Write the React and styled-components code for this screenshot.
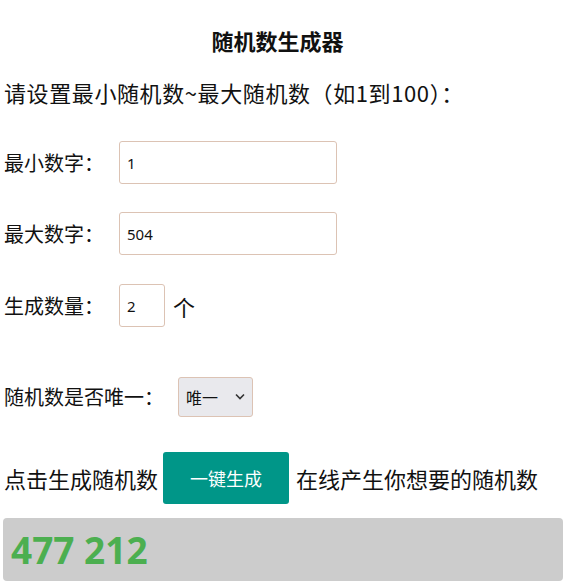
import React, { useState } from 'react'
import styled, { createGlobalStyle } from 'styled-components'

const GlobalStyle = createGlobalStyle`
    html, body {
        margin: 0;
        padding: 0;
        background: #fff;
    }
    body {
        font-family: "Noto Sans CJK SC", "Noto Sans", sans-serif;
        color: #111;
    }
`;

const Page = styled.div`
    width: 560px;
    padding: 0 6px 6px 3px;
`;

const Title = styled.h3`
    margin: 25px 11px 0 0;
    font-size: 22px;
    line-height: 30px;
    font-weight: 700;
    text-align: center;
`;

const Intro = styled.p`
    margin: 22px 0 0 1px;
    font-size: 22px;
    line-height: 30px;
    letter-spacing: 0.6px;
`;

const Row = styled.div`
    display: flex;
    align-items: center;
    margin-top: ${({top}) => top}px;
    font-size: ${({big}) => (big ? '22px' : '20px')};
    line-height: 30px;
`;

const Label = styled.span`
    margin-left: 1px;
    width: ${({w}) => w}px;
    white-space: nowrap;
`;

const Field = styled.input`
    box-sizing: border-box;
    width: ${({w}) => w}px;
    height: 43px;
    margin-left: ${({gap}) => gap}px;
    padding: 0 7px;
    border: 1px solid #dcc3b4;
    border-radius: 3px;
    font-family: "Noto Sans", sans-serif;
    font-size: 15px;
    color: #111;
    outline: none;
`;

const Unit = styled.span`
    margin-left: 8px;
    font-size: 22px;
`;

const SelectWrap = styled.span`
    position: relative;
    display: inline-flex;
    margin-left: 14px;
`;

const Choice = styled.select`
    box-sizing: border-box;
    width: 75px;
    height: 40px;
    padding: 0 22px 0 7px;
    appearance: none;
    background: #e9e9ed;
    border: 1px solid #dcc3b4;
    border-radius: 3px;
    font-family: "Noto Sans CJK SC", sans-serif;
    font-size: 16px;
    color: #111;
`;

const Chevron = styled.svg`
    position: absolute;
    right: 8px;
    top: 16px;
    width: 10px;
    height: 7px;
    pointer-events: none;
`;

const GoButton = styled.button`
    width: 126px;
    height: 52px;
    margin: 0 7px 0 6px;
    background: #009688;
    color: #fff;
    border: none;
    border-radius: 3px;
    font-family: "Noto Sans CJK SC", sans-serif;
    font-size: 18px;
    cursor: pointer;
`;

const Result = styled.div`
    box-sizing: border-box;
    height: 63px;
    margin-top: 14px;
    padding: 0 8px;
    display: flex;
    align-items: center;
    background: #cccccc;
    border-radius: 4px;
    color: #4caf50;
    font-family: "Noto Sans", sans-serif;
    font-size: 37px;
    font-weight: 700;
`;

export default function App() {
    const [min, setMin] = useState('1')
    const [max, setMax] = useState('504')
    const [count, setCount] = useState('2')
    const [unique, setUnique] = useState('1')
    const [result, setResult] = useState('477 212')

    const generate = () => {
        const lo = parseInt(min, 10) || 0
        const hi = parseInt(max, 10) || 0
        const n = parseInt(count, 10) || 1
        const out = []
        while (out.length < n) {
            const v = lo + Math.floor(Math.random() * (hi - lo + 1))
            if (unique === '1' && out.includes(v) && hi - lo + 1 > out.length) continue
            out.push(v)
        }
        setResult(out.join(' '))
    }

    return (
        <Page>
            <GlobalStyle />
            <Title>随机数生成器</Title>
            <Intro>请设置最小随机数~最大随机数（如1到100）：</Intro>
            <Row top={34}>
                <Label w={100}>最小数字：</Label>
                <Field w={218} gap={15} value={min} onChange={e => setMin(e.target.value)} />
            </Row>
            <Row top={28}>
                <Label w={100}>最大数字：</Label>
                <Field w={218} gap={15} value={max} onChange={e => setMax(e.target.value)} />
            </Row>
            <Row top={29}>
                <Label w={100}>生成数量：</Label>
                <Field w={46} gap={15} value={count} onChange={e => setCount(e.target.value)} />
                <Unit>个</Unit>
            </Row>
            <Row top={50}>
                <Label w={160}>随机数是否唯一：</Label>
                <SelectWrap>
                    <Choice value={unique} onChange={e => setUnique(e.target.value)}>
                        <option value="1">唯一</option>
                        <option value="0">可重复</option>
                    </Choice>
                    <Chevron viewBox="0 0 10 7">
                        <path d="M1 1.5 L5 5.5 L9 1.5" fill="none" stroke="#333" strokeWidth="1.6" />
                    </Chevron>
                </SelectWrap>
            </Row>
            <Row top={35} big>
                <Label w={153}>点击生成随机数</Label>
                <GoButton onClick={generate}>一键生成</GoButton>
                <span>在线产生你想要的随机数</span>
            </Row>
            <Result>{result}</Result>
        </Page>
    )
}
